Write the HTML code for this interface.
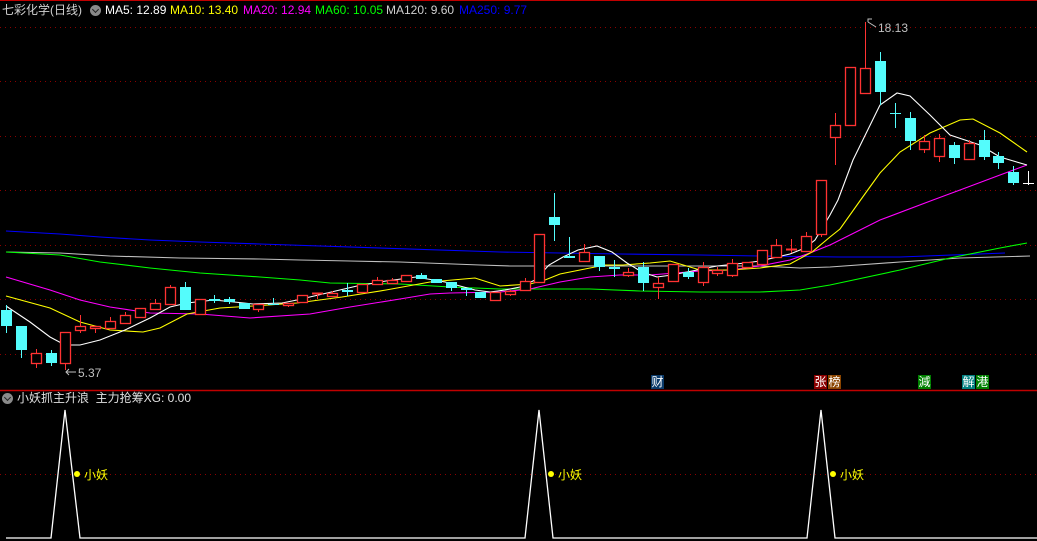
<!DOCTYPE html>
<html><head><meta charset="utf-8">
<style>
html,body{margin:0;padding:0;background:#000;}
body{width:1037px;height:541px;overflow:hidden;position:relative;font-family:"Liberation Sans","Noto Sans CJK SC",sans-serif;}
.t{position:absolute;font-size:12px;white-space:nowrap;line-height:14px;}
.circ{position:absolute;width:11px;height:11px;border-radius:50%;background:#8a8a8a;}
.circ:after{content:"";position:absolute;left:3px;top:2px;width:4px;height:4px;border-right:1.5px solid #222;border-bottom:1.5px solid #222;transform:rotate(45deg);}
.tag{position:absolute;top:375px;width:13px;height:14px;font-size:12px;line-height:14px;color:#fff;text-align:center;}
</style></head><body>
<svg id="s" width="1037" height="541" style="position:absolute;left:0;top:0" xmlns="http://www.w3.org/2000/svg">
<line x1="0" y1="0.5" x2="1037" y2="0.5" stroke="#c00000"/>
<line x1="0" y1="390.5" x2="1037" y2="390.5" stroke="#c00000" stroke-width="1.5"/>
<g stroke="#8b0000" stroke-dasharray="1,4">
<line x1="0" y1="27.5" x2="1037" y2="27.5"/><line x1="0" y1="81.5" x2="1037" y2="81.5"/>
<line x1="0" y1="136.5" x2="1037" y2="136.5"/><line x1="0" y1="190.5" x2="1037" y2="190.5"/>
<line x1="0" y1="245.5" x2="1037" y2="245.5"/><line x1="0" y1="299.5" x2="1037" y2="299.5"/>
<line x1="0" y1="354.5" x2="1037" y2="354.5"/><line x1="0" y1="474.5" x2="1037" y2="474.5"/>
</g>
<g fill="none" stroke-width="1.1">
<polyline stroke="#0000ff" points="6,231 60,234 100,237 150,240 200,242 260,244 500,252 560,253 620,254 700,255 760,256 840,257 900,257 1005,253"/>
<polyline stroke="#c0c0c0" points="6,252 60,253 110,256 180,258 260,259 300,260 350,261 400,262 480,265 510,266 600,266 700,266 760,266 800,268 830,267 900,262 960,258 1030,256"/>
<polyline stroke="#00ff00" points="6,252 60,255 100,262 150,268 200,273 260,277 300,280 330,283 400,284 450,287 500,289 590,289 640,291 700,292 760,292 800,290 830,285 900,270 950,258 1000,248 1027,243"/>
<polyline stroke="#ff00ff" points="6,277 50,290 80,300 110,307 150,313 200,314 250,318 310,314 350,307 400,299 430,294 450,293 500,292 530,289 560,282 590,277 620,275 650,275 700,271 730,270 760,266 790,260 810,253 830,245 880,220 933,200 960,190 1000,175 1027,165"/>
<polyline stroke="#ffff00" points="6,296 50,308 80,322 110,330 143,332 160,328 187,314 220,308 253,306 297,303 342,297 386,290 430,282 475,278 500,286 530,284 545,280 560,274 590,268 605,265 623,265 650,263 670,261 690,267 700,270 730,270 760,268 790,264 812,252 830,237 840,229 862,198 880,173 900,152 930,133 960,120 973,119 1000,133 1027,152"/>
<polyline stroke="#ffffff" points="6,306 30,322 50,337 65,345 80,345 100,340 125,330 150,318 170,307 187,303 214,300 244,303 253,304 282,303 297,300 327,293 357,286 386,281 416,277 445,282 475,290 490,292 505,290 520,287 535,280 549,265 563,257 578,250 597,246 612,252 627,263 642,272 657,277 672,275 687,272 702,269 717,266 745,263 760,261 790,254 805,248 815,240 830,215 838,200 853,160 880,105 897,93 910,96 930,115 950,135 980,145 1000,157 1010,160 1027,165"/>
</g>
<g id="cd"></g>
<g stroke="#c0c0c0" fill="none" stroke-width="1">
<polyline points="868,22 868,19 872,19"/><line x1="868" y1="22" x2="876" y2="27"/>
<line x1="66" y1="372" x2="76" y2="372"/><polyline points="69,369 66,372 69,375"/>
</g>
<text x="878" y="32" fill="#c0c0c0" font-size="12" font-family="Liberation Sans">18.13</text>
<text x="78" y="377" fill="#c0c0c0" font-size="12" font-family="Liberation Sans">5.37</text>
<g stroke="#ffffff" fill="none" stroke-width="1.3">
<polyline points="6,538 51,538 65,410 80,538 525,538 539,410 553,538 807,538 821,410 835,538 1037,538"/>
</g>
<g fill="#ffff00"><circle cx="77" cy="474" r="3"/><circle cx="551" cy="474" r="3"/><circle cx="833" cy="474" r="3"/></g>
<g fill="#ffff00" font-size="12" font-family="Liberation Sans,Noto Sans CJK SC,sans-serif">
<text x="84" y="479">小妖</text><text x="558" y="479">小妖</text><text x="840" y="479">小妖</text>
</g>
</svg>
<div class="t" style="left:2px;top:3px;color:#d0d0d0">七彩化学(日线)</div>
<div class="circ" style="left:90px;top:5px"></div>
<div class="t" style="left:105px;top:3px;color:#fff">MA5: 12.89</div>
<div class="t" style="left:170px;top:3px;color:#ffff00">MA10: 13.40</div>
<div class="t" style="left:243px;top:3px;color:#ff00ff">MA20: 12.94</div>
<div class="t" style="left:315px;top:3px;color:#00ff00">MA60: 10.05</div>
<div class="t" style="left:386px;top:3px;color:#d0d0d0">MA120: 9.60</div>
<div class="t" style="left:459px;top:3px;color:#0000ff">MA250: 9.77</div>
<div class="circ" style="left:2px;top:393px"></div>
<div class="t" style="left:17px;top:391px;color:#e0e0e0">小妖抓主升浪 &nbsp;主力抢筹XG: 0.00</div>
<div class="tag" style="left:651px;background:#0a3a6a">财</div>
<div class="tag" style="left:814px;background:#8b0000">张</div>
<div class="tag" style="left:828px;background:#8b4500">榜</div>
<div class="tag" style="left:918px;background:#008000">減</div>
<div class="tag" style="left:962px;background:#008080">解</div>
<div class="tag" style="left:976px;background:#008000">港</div>
<script>
var D=[[6,'c',305,310,326,333],[21,'c',326,326,350,358],[36,'r',349,353,363,368],[51,'c',350,353,363,366],[65,'r',332,332,363,370],[80,'r',315,326,330,333],[95,'r',326,326,328,333],[110,'r',317,321,328,328],[125,'r',312,315,323,323],[140,'r',308,308,317,317],[155,'r',299,303,309,309],[170,'r',285,287,304,304],[185,'c',282,287,310,310],[200,'r',299,299,314,314],[214,'c',295,299,301,303],[229,'c',297,299,302,304],[244,'c',303,303,309,309],[258,'r',304,304,309,312],[273,'c',298,304,305,305],[288,'r',303,303,305,307],[302,'r',295,295,302,302],[317,'r',293,293,294,299],[332,'r',291,293,296,296],[347,'c',283,290,292,296],[362,'r',284,284,292,292],[377,'r',277,280,284,284],[392,'r',278,280,283,283],[406,'r',275,275,281,281],[421,'c',273,275,279,279],[436,'c',279,279,283,283],[451,'c',282,282,288,291],[466,'c',288,288,290,296],[480,'c',292,292,298,298],[495,'r',292,292,300,300],[510,'r',290,291,294,296],[525,'r',278,281,290,290],[539,'r',234,234,282,282],[554,'c',193,217,225,241],[569,'c',237,256,258,258],[584,'r',244,252,261,261],[599,'c',256,256,267,271],[614,'c',260,267,269,277],[628,'r',268,272,275,277],[643,'c',262,267,283,291],[658,'r',277,283,287,299],[673,'r',264,264,281,281],[688,'c',268,272,277,279],[703,'r',262,267,282,286],[717,'r',267,270,273,276],[732,'r',259,263,275,277],[747,'r',262,262,267,267],[762,'r',250,250,264,264],[776,'r',239,245,257,257],[791,'r',239,249,249,253],[806,'r',232,236,251,251],[821,'r',180,180,234,237],[835,'r',113,125,137,165],[850,'r',67,67,125,125],[865,'r',22,68,93,93],[880,'c',52,61,92,105],[895,'c',103,113,113,128],[910,'c',112,118,141,150],[924,'r',135,141,149,153],[939,'r',134,138,156,162],[954,'c',142,145,158,164],[969,'r',140,143,159,159],[984,'c',130,140,157,160],[998,'c',152,156,163,169],[1013,'c',166,172,183,185],[1028,'w',171,183,183,185]];
var h='';D.forEach(function(d){var x=d[0],col=d[1]=='r'?'#ff3232':d[1]=='c'?'#54fcfc':'#ffffff';
h+='<line x1="'+(x+.5)+'" y1="'+d[2]+'" x2="'+(x+.5)+'" y2="'+d[5]+'" stroke="'+col+'"/>';
if(d[4]-d[3]<2){h+='<line x1="'+(x-5)+'" y1="'+(d[3]+.5)+'" x2="'+(x+6)+'" y2="'+(d[3]+.5)+'" stroke="'+col+'" stroke-width="'+(d[1]=='r'?2:1)+'"/>';}
else if(d[1]=='r'){h+='<rect x="'+(x-4.5)+'" y="'+(d[3]+.5)+'" width="10" height="'+(d[4]-d[3])+'" fill="#000" stroke="'+col+'" stroke-width="1.3"/>';}
else{h+='<rect x="'+(x-5)+'" y="'+d[3]+'" width="11" height="'+(d[4]-d[3])+'" fill="'+col+'"/>';}});
document.getElementById('cd').innerHTML=h;
</script>
</body></html>
